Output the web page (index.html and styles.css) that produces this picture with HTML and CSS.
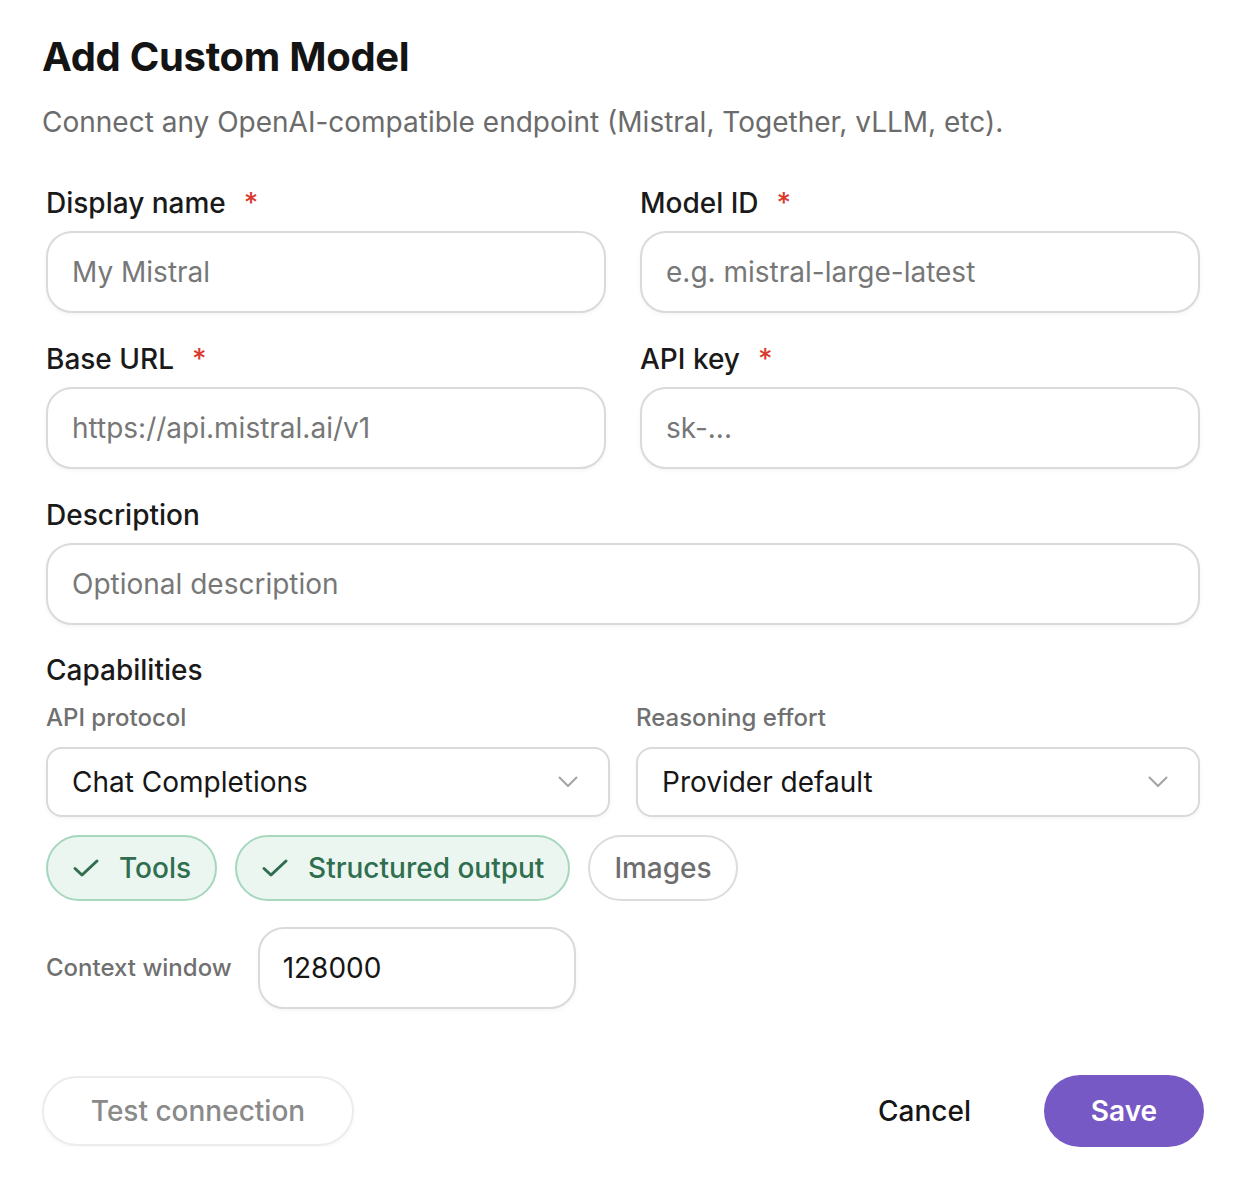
FILE: index.html
```html
<!DOCTYPE html>
<html lang="en">
<head>
<meta charset="utf-8">
<title>Add Custom Model</title>
<link rel="stylesheet" href="styles.css">
</head>
<body>
<div class="dialog">
  <h1 class="title">Add Custom Model</h1>
  <p class="subtitle">Connect any OpenAI-compatible endpoint (Mistral, Together, vLLM, etc).</p>

  <div class="form">
    <div class="grid">
      <div class="field">
        <div class="label">Display name<span class="req">*</span></div>
        <div class="input placeholder">My Mistral</div>
      </div>
      <div class="field">
        <div class="label">Model ID<span class="req">*</span></div>
        <div class="input placeholder">e.g. mistral-large-latest</div>
      </div>
      <div class="field">
        <div class="label">Base URL<span class="req">*</span></div>
        <div class="input placeholder">https://api.mistral.ai/v1</div>
      </div>
      <div class="field">
        <div class="label">API key<span class="req">*</span></div>
        <div class="input placeholder">sk-...</div>
      </div>
      <div class="field wide">
        <div class="label">Description</div>
        <div class="input placeholder">Optional description</div>
      </div>
    </div>

    <h2 class="section-title">Capabilities</h2>
    <div class="select-grid">
      <div class="select-field">
        <div class="small-label">API protocol</div>
        <div class="select">
          <span>Chat Completions</span>
          <svg class="chevron" viewBox="0 0 20 12" width="20" height="12"><polyline points="1.5,1.5 10,10 18.5,1.5" fill="none" stroke="#a3a3a3" stroke-width="2" stroke-linecap="round" stroke-linejoin="round"/></svg>
        </div>
      </div>
      <div class="select-field">
        <div class="small-label">Reasoning effort</div>
        <div class="select">
          <span>Provider default</span>
          <svg class="chevron" viewBox="0 0 20 12" width="20" height="12"><polyline points="1.5,1.5 10,10 18.5,1.5" fill="none" stroke="#a3a3a3" stroke-width="2" stroke-linecap="round" stroke-linejoin="round"/></svg>
        </div>
      </div>
    </div>

    <div class="chips">
      <div class="chip on">
        <svg class="check" viewBox="0 0 28 20" width="28" height="20"><polyline points="3,10.5 10,17 25,3" fill="none" stroke="#2f6e4f" stroke-width="3" stroke-linecap="round" stroke-linejoin="round"/></svg>
        <span>Tools</span>
      </div>
      <div class="chip on">
        <svg class="check" viewBox="0 0 28 20" width="28" height="20"><polyline points="3,10.5 10,17 25,3" fill="none" stroke="#2f6e4f" stroke-width="3" stroke-linecap="round" stroke-linejoin="round"/></svg>
        <span>Structured output</span>
      </div>
      <div class="chip">
        <span>Images</span>
      </div>
    </div>

    <div class="context-row">
      <span class="small-label">Context window</span>
      <div class="input context-input">128000</div>
    </div>
  </div>

  <div class="footer">
    <button class="btn-test">Test connection</button>
    <div class="footer-right">
      <button class="btn-cancel">Cancel</button>
      <button class="btn-save">Save</button>
    </div>
  </div>
</div>
</body>
</html>
```

FILE: styles.css
```css
* {
  box-sizing: border-box;
}

html, body {
  margin: 0;
  padding: 0;
  background: #ffffff;
}

body {
  font-family: Inter, "Noto Sans", "Liberation Sans", sans-serif;
  color: #161616;
}

.dialog {
  width: 1254px;
  padding: 33px 50px 0 42px;
}

.title {
  margin: 0;
  font-size: 40px;
  line-height: 48px;
  font-weight: 700;
  color: #141414;
  letter-spacing: -0.3px;
}

.subtitle {
  margin: 24px 0 0;
  font-size: 28px;
  line-height: 34px;
  font-weight: 400;
  color: #6b6b6b;
}

.form {
  padding: 0 4px;
  margin-top: 47px;
}

.grid {
  display: grid;
  grid-template-columns: 1fr 1fr;
  column-gap: 34px;
  row-gap: 29px;
}

.field {
  display: flex;
  flex-direction: column;
  gap: 11px;
}

.field.wide {
  grid-column: 1 / span 2;
}

.label {
  font-size: 28px;
  line-height: 34px;
  font-weight: 500;
  color: #1a1a1a;
}

.req {
  color: #d93a2e;
  margin-left: 18px;
}

.input {
  height: 82px;
  border: 2px solid #dadada;
  border-radius: 26px;
  padding: 0 24px;
  display: flex;
  align-items: center;
  font-size: 28px;
  color: #161616;
  background: #fff;
  box-shadow: 0 2px 4px rgba(0, 0, 0, 0.04);
}

.placeholder {
  color: #777777;
}

.section-title {
  margin: 28px 0 0;
  font-size: 28px;
  line-height: 34px;
  font-weight: 500;
  color: #1a1a1a;
}

.small-label {
  font-size: 24px;
  line-height: 30px;
  font-weight: 500;
  color: #707070;
}

.select-grid {
  margin-top: 16px;
  display: grid;
  grid-template-columns: 1fr 1fr;
  column-gap: 26px;
}

.select-field {
  display: flex;
  flex-direction: column;
  gap: 14px;
}

.select {
  height: 70px;
  border: 2px solid #dadada;
  border-radius: 16px;
  padding: 0 30px 0 24px;
  display: flex;
  align-items: center;
  justify-content: space-between;
  font-size: 28px;
  color: #161616;
  background: #fff;
  box-shadow: 0 2px 4px rgba(0, 0, 0, 0.04);
}

.chevron {
  display: block;
}

.chips {
  margin-top: 18px;
  display: flex;
  gap: 18px;
}

.chip {
  height: 66px;
  border-radius: 33px;
  border: 2px solid #dcdcdc;
  padding: 0 24px;
  display: flex;
  align-items: center;
  gap: 19px;
  font-size: 28px;
  font-weight: 500;
  color: #6d6d6d;
  background: #fff;
}

.chip.on {
  background: #ebf6f0;
  border-color: #a5d7bd;
  color: #2f6e4f;
}

.check {
  display: block;
}

.context-row {
  margin-top: 26px;
  display: flex;
  align-items: center;
  gap: 26px;
}

.context-input {
  width: 318px;
  padding-left: 23px;
}

.footer {
  margin-top: 66px;
  display: flex;
  align-items: center;
  justify-content: space-between;
}

.footer-right {
  display: flex;
  align-items: center;
  gap: 73px;
}

button {
  font-family: inherit;
  cursor: pointer;
}

.btn-test {
  height: 70px;
  width: 312px;
  border-radius: 35px;
  border: 2px solid #ececec;
  background: #fff;
  font-size: 28px;
  font-weight: 500;
  color: #8a8a8a;
  box-shadow: 0 2px 4px rgba(0, 0, 0, 0.03);
}

.btn-cancel {
  border: none;
  background: none;
  padding: 0;
  font-size: 28px;
  font-weight: 500;
  color: #161616;
}

.btn-save {
  height: 72px;
  width: 160px;
  border-radius: 36px;
  border: none;
  background: #7759c6;
  font-size: 28px;
  font-weight: 600;
  color: #ffffff;
}
```
